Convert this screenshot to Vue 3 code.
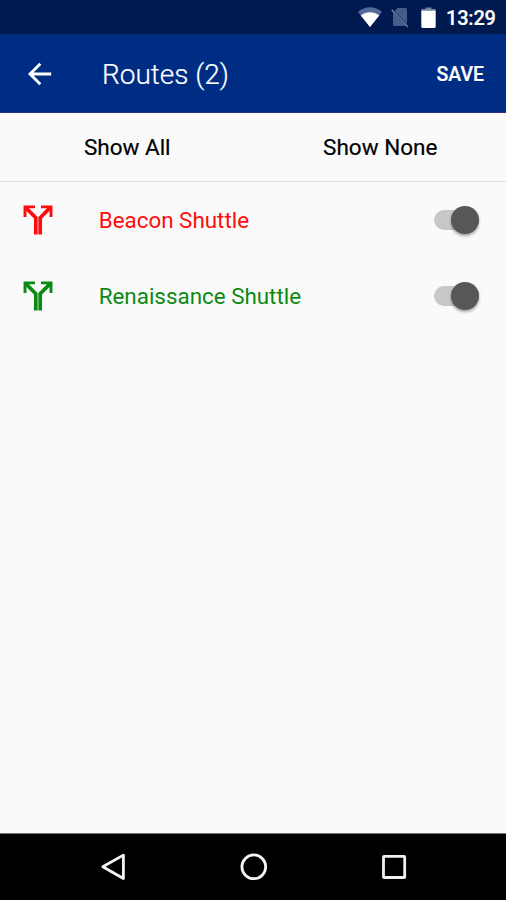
<script setup>
import { ref } from 'vue'

const routes = ref([
  { name: 'Beacon Shuttle', color: '#fd0d0d', on: true },
  { name: 'Renaissance Shuttle', color: '#0a8a12', on: true },
])
</script>

<template>
  <div class="screen">
    <div class="status">
      <svg class="wifi" viewBox="0 0 24 20">
        <path d="M0 5C7-1.2 17-1.2 24 5L12 20Z" fill="#526a98" />
        <path d="M2.8 8.4C8.5 4.3 15.5 4.3 21.2 8.4L12 20Z" fill="#fff" />
      </svg>
      <svg class="sim" viewBox="0 0 18 20">
        <path d="M6.5 0H14.5Q16 0 16 1.5V16L3.8 3ZM2 4.5L14.5 18H3.5Q2 18 2 16.5Z" fill="#465c8a" />
        <path d="M.8 1.8L16.8 18.8" stroke="#63769f" stroke-width="1.7" />
      </svg>
      <svg class="battery" viewBox="0 0 15 22">
        <path d="M4.5 .5H10.5V2H14.5V5H.5V2H4.5Z" fill="#74859f" />
        <path d="M.3 3.8H14.7V19.6Q14.7 21 13.3 21H1.7Q.3 21 .3 19.6Z" fill="#fff" />
      </svg>
      <span class="time">13:29</span>
    </div>

    <header class="appbar">
      <svg class="back" viewBox="0 0 24 24">
        <path d="M23.2 12H2.5M12.3 1.7L2 12L12.3 22.3" fill="none" stroke="#fff" stroke-width="2.9" />
      </svg>
      <h1>Routes (2)</h1>
      <button class="save">SAVE</button>
    </header>

    <div class="filters">
      <button class="all">Show All</button>
      <button class="none">Show None</button>
    </div>

    <ul class="list">
      <li v-for="route in routes" :key="route.name" :style="{ color: route.color }">
        <svg class="split" viewBox="0 0 30 30">
          <path
            d="M2 12V1.9H12M18 1.9H28V12"
            fill="none" stroke="currentColor" stroke-width="2.9"
          />
          <path
            d="M2.5 2.4L12.8 12.7V29.5M27.5 2.4L17.2 12.7V29.5"
            fill="none" stroke="currentColor" stroke-width="3.7"
          />
        </svg>
        <span class="name">{{ route.name }}</span>
        <span class="switch" role="switch" :aria-checked="route.on" @click="route.on = !route.on">
          <span class="knob" :class="{ off: !route.on }"></span>
        </span>
      </li>
    </ul>

    <nav class="navbar">
      <svg viewBox="0 0 30 30">
        <path d="M4.8 14.8L25.4 3.1V26.5Z" fill="none" stroke="#f4f4f4" stroke-width="2.8" stroke-linejoin="round" />
      </svg>
      <svg viewBox="0 0 30 30">
        <circle cx="14.8" cy="14.8" r="11.9" fill="none" stroke="#f4f4f4" stroke-width="2.8" />
      </svg>
      <svg viewBox="0 0 30 30">
        <rect x="4.5" y="4.3" width="21.2" height="21.2" rx=".6" fill="none" stroke="#f0f0f0" stroke-width="2.8" />
      </svg>
    </nav>
  </div>
</template>

<style>
body {
  margin: 0;
}
</style>

<style scoped>
.screen {
  width: 506px;
  height: 900px;
  display: flex;
  flex-direction: column;
  background: #fafafa;
  font-family: Roboto, sans-serif;
  overflow: hidden;
}
svg {
  display: block;
  flex: none;
}
button {
  border: 0;
  padding: 0;
  background: none;
  font: inherit;
  white-space: nowrap;
}
.status {
  box-sizing: border-box;
  height: 34px;
  flex: none;
  display: flex;
  align-items: flex-start;
  background: #001a4f;
  padding-left: 358px;
}
.wifi {
  width: 24px;
  height: 20px;
  margin-top: 7px;
}
.sim {
  width: 18px;
  height: 20px;
  margin: 8px 0 0 9px;
}
.battery {
  width: 15px;
  height: 22px;
  margin: 7px 0 0 12px;
}
.time {
  margin: 6px 0 0 10px;
  color: #fff;
  font-size: 20px;
  line-height: 24px;
  font-weight: 500;
  letter-spacing: -0.2px;
  -webkit-text-stroke: 0.2px #fff;
}
.appbar {
  box-sizing: border-box;
  height: 79px;
  flex: none;
  display: flex;
  align-items: center;
  background: #002d84;
  border-bottom: 1px solid #28307c;
  padding: 0 22px 0 28px;
  color: #fff;
}
.back {
  width: 24px;
  height: 24px;
  margin-top: 1px;
}
h1 {
  flex: 1;
  margin: 3px 0 0 50px;
  font-size: 28px;
  line-height: 34px;
  font-weight: 300;
  -webkit-text-stroke: 0.2px #fff;
}
.save {
  color: #fff;
  font-size: 19.5px;
  font-weight: 500;
  margin-top: 2px;
  -webkit-text-stroke: 0.2px #fff;
}
.filters {
  box-sizing: border-box;
  height: 69px;
  flex: none;
  display: flex;
  align-items: center;
  border-bottom: 1px solid #dedede;
  font-size: 22.5px;
  color: #111;
}
.filters button {
  flex: 1;
  padding-left: 1.5px;
  -webkit-text-stroke: 0.2px #111;
}
.list {
  flex: 1;
  list-style: none;
  margin: 0;
  padding: 0;
}
li {
  height: 76px;
  display: flex;
  align-items: center;
  padding: 0 27px 0 23px;
}
.split {
  width: 30px;
  height: 30px;
}
.name {
  flex: 1;
  margin-left: 45.7px;
  font-size: 22.4px;
}
.switch {
  width: 45px;
  height: 20px;
  display: flex;
  justify-content: flex-end;
  align-items: center;
  border-radius: 10px;
  background: #c8c8c8;
}
.knob {
  width: 28px;
  height: 28px;
  flex: none;
  border-radius: 50%;
  background: #575757;
  box-shadow: 0 2px 3px rgba(0, 0, 0, 0.35);
}
.knob.off {
  margin-right: auto;
}
.navbar {
  box-sizing: border-box;
  height: 67px;
  flex: none;
  display: flex;
  align-items: center;
  gap: 110.5px;
  background: #000;
  border-top: 1px solid #777;
  padding-left: 98px;
}
.navbar svg {
  width: 30px;
  height: 30px;
}
</style>
